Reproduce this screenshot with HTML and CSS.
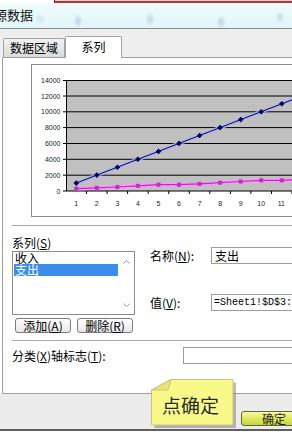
FILE: index.html
```html
<!DOCTYPE html>
<html>
<head>
<meta charset="utf-8">
<link rel="stylesheet" href="styles.css">
</head>
<body>
<div class="dlg">
  <div class="topstrip"><div class="ts-left"></div><div class="ts-red"></div></div>
  <div class="titlebar"><span class="title">源数据</span></div>
  <div class="tabstrip">
    <div class="tab">数据区域</div>
    <div class="tab active">系列</div>
  </div>
  <div class="panel">
    <div class="chartbox">
      <svg width="320" height="151" viewBox="0 0 320 151">
        <defs>
          <path id="dm" d="M0,-2.8 L2.8,0 L0,2.8 L-2.8,0Z" fill="#000060"/>
          <rect id="sq" x="-2" y="-2" width="4" height="4" fill="#c030c0"/>
        </defs>
        <rect x="34" y="15" width="290" height="111" fill="#c0c0c0"/>
        <g stroke="#000" stroke-width="1">
          <line x1="34" y1="15.5" x2="320" y2="15.5"/>
          <line x1="34" y1="31" x2="320" y2="31"/>
          <line x1="34" y1="46.8" x2="320" y2="46.8"/>
          <line x1="34" y1="62.6" x2="320" y2="62.6"/>
          <line x1="34" y1="78.5" x2="320" y2="78.5"/>
          <line x1="34" y1="94.3" x2="320" y2="94.3"/>
          <line x1="34" y1="110.2" x2="320" y2="110.2"/>
          <line x1="31" y1="126" x2="320" y2="126"/>
          <line x1="34.5" y1="15" x2="34.5" y2="126"/>
          <line x1="31" y1="15.5" x2="34" y2="15.5"/>
          <line x1="31" y1="31" x2="34" y2="31"/>
          <line x1="31" y1="46.8" x2="34" y2="46.8"/>
          <line x1="31" y1="62.6" x2="34" y2="62.6"/>
          <line x1="31" y1="78.5" x2="34" y2="78.5"/>
          <line x1="31" y1="94.3" x2="34" y2="94.3"/>
          <line x1="31" y1="110.2" x2="34" y2="110.2"/>
          <line x1="54.5" y1="126" x2="54.5" y2="129"/>
          <line x1="75.1" y1="126" x2="75.1" y2="129"/>
          <line x1="95.6" y1="126" x2="95.6" y2="129"/>
          <line x1="116.2" y1="126" x2="116.2" y2="129"/>
          <line x1="136.7" y1="126" x2="136.7" y2="129"/>
          <line x1="157.3" y1="126" x2="157.3" y2="129"/>
          <line x1="177.8" y1="126" x2="177.8" y2="129"/>
          <line x1="198.4" y1="126" x2="198.4" y2="129"/>
          <line x1="218.9" y1="126" x2="218.9" y2="129"/>
          <line x1="239.5" y1="126" x2="239.5" y2="129"/>
          <line x1="260" y1="126" x2="260" y2="129"/>
        </g>
        <g class="ylab" text-anchor="end">
          <text x="28.5" y="18">14000</text>
          <text x="28.5" y="33.5">12000</text>
          <text x="28.5" y="49.3">10000</text>
          <text x="28.5" y="65.1">8000</text>
          <text x="28.5" y="81">6000</text>
          <text x="28.5" y="96.8">4000</text>
          <text x="28.5" y="112.7">2000</text>
          <text x="28.5" y="128.5">0</text>
        </g>
        <g class="xlab" text-anchor="middle">
          <text x="44.3" y="140.5">1</text>
          <text x="64.8" y="140.5">2</text>
          <text x="85.4" y="140.5">3</text>
          <text x="105.9" y="140.5">4</text>
          <text x="126.5" y="140.5">5</text>
          <text x="147" y="140.5">6</text>
          <text x="167.6" y="140.5">7</text>
          <text x="188.1" y="140.5">8</text>
          <text x="208.7" y="140.5">9</text>
          <text x="229.2" y="140.5">10</text>
          <text x="249.3" y="140.5">11</text>
        </g>
        <polyline fill="none" stroke="#b4b4e6" stroke-width="4" opacity="0.8" points="44.3,118.1 64.8,110.1 85.4,102.2 105.9,94.3 126.5,86.4 147,78.4 167.6,70.5 188.1,62.6 208.7,54.6 229.2,46.7 249.8,38.8 270.3,30.9"/>
        <polyline fill="none" stroke="#000070" stroke-width="1" points="44.3,118.1 64.8,110.1 85.4,102.2 105.9,94.3 126.5,86.4 147,78.4 167.6,70.5 188.1,62.6 208.7,54.6 229.2,46.7 249.8,38.8 270.3,30.9"/>
        <polyline fill="none" stroke="#f0a0f0" stroke-width="4" points="44.3,123.6 64.8,122.8 85.4,122 105.9,120.8 126.5,119.7 147,119.7 167.6,118.9 188.1,117.7 208.7,116.5 229.2,115.3 249.8,115.3 270.3,114.5"/>
        <polyline fill="none" stroke="#d020d0" stroke-width="1.2" points="44.3,123.6 64.8,122.8 85.4,122 105.9,120.8 126.5,119.7 147,119.7 167.6,118.9 188.1,117.7 208.7,116.5 229.2,115.3 249.8,115.3 270.3,114.5"/>
        <use href="#dm" x="44.3" y="118.1"/><use href="#dm" x="64.8" y="110.1"/><use href="#dm" x="85.4" y="102.2"/>
        <use href="#dm" x="105.9" y="94.3"/><use href="#dm" x="126.5" y="86.4"/><use href="#dm" x="147" y="78.4"/>
        <use href="#dm" x="167.6" y="70.5"/><use href="#dm" x="188.1" y="62.6"/><use href="#dm" x="208.7" y="54.6"/>
        <use href="#dm" x="229.2" y="46.7"/><use href="#dm" x="249.8" y="38.8"/><use href="#dm" x="270.3" y="30.9"/>
        <use href="#sq" x="44.3" y="123.6"/><use href="#sq" x="64.8" y="122.8"/><use href="#sq" x="85.4" y="122"/>
        <use href="#sq" x="105.9" y="120.8"/><use href="#sq" x="126.5" y="119.7"/><use href="#sq" x="147" y="119.7"/>
        <use href="#sq" x="167.6" y="118.9"/><use href="#sq" x="188.1" y="117.7"/><use href="#sq" x="208.7" y="116.5"/>
        <use href="#sq" x="229.2" y="115.3"/><use href="#sq" x="249.8" y="115.3"/><use href="#sq" x="270.3" y="114.5"/>
      </svg>
    </div>
    <div class="series-sec">
      <div class="scol">
        <div class="lbl">系列(<u>S</u>)</div>
        <div class="list">
          <div class="items">
            <div class="item">收入</div>
            <div class="item sel">支出</div>
          </div>
          <div class="scroll">
            <svg width="7" height="4" viewBox="0 0 7 4"><path d="M0.5,3.5 L3.5,0.5 L6.5,3.5" fill="none" stroke="#9a9a9a" stroke-width="1"/></svg>
            <svg width="7" height="4" viewBox="0 0 7 4"><path d="M0.5,0.5 L3.5,3.5 L6.5,0.5" fill="none" stroke="#9a9a9a" stroke-width="1"/></svg>
          </div>
        </div>
        <div class="btns">
          <div class="btn">添加(<u>A</u>)</div>
          <div class="btn">删除(<u>R</u>)</div>
        </div>
      </div>
      <div class="fcol">
        <div class="frow">
          <span class="flbl">名称(<u>N</u>):</span>
          <div class="inp">支出</div>
        </div>
        <div class="frow second">
          <span class="flbl">值(<u>V</u>):</span>
          <div class="inp mono">=Sheet1!$D$3:$D$14</div>
        </div>
      </div>
    </div>
    <div class="cat-sec">
      <span class="clbl">分类(<u>X</u>)轴标志(<u>T</u>):</span>
      <div class="inp"></div>
    </div>
  </div>
  <div class="footer"><div class="okbtn">确定</div></div>
  <div class="callout">
    <svg class="callout-bg" width="88" height="52" viewBox="0 0 88 52">
      <polygon points="3.5,14 23,3.5 85,3.5 85,49 3.5,49" fill="#6a6a6a" opacity="0.45"/>
      <polygon points="0.5,11 20,0.5 82,0.5 82,46 0.5,46" fill="#f9f98a" stroke="#c9c47c" stroke-width="1"/>
      <polygon points="0.5,11 20,0.5 17,11" fill="#e9e47a" stroke="#c9c47c" stroke-width="1"/>
    </svg>
    <span class="callout-text">点确定</span>
  </div>
</div>
</body>
</html>
```
FILE: styles.css
```css
html, body {
  margin: 0;
  padding: 0;
  width: 292px;
  height: 435px;
  overflow: hidden;
  background: #ffffff;
}
body {
  font-family: "Noto Sans CJK SC", "Liberation Sans", sans-serif;
  font-size: 12px;
  color: #000;
}
u { text-decoration: underline; text-underline-offset: 1px; }
.dlg {
  width: 340px;
  position: relative;
}
.topstrip {
  height: 3px;
  display: flex;
}
.ts-left { width: 54px; background: #fff; }
.ts-red {
  flex: 1;
  box-sizing: border-box;
  background: #e6d2d2;
  border-left: 1px solid #4a2020;
  border-bottom: 2px solid #b03838;
}
.titlebar {
  height: 25px;
  border-bottom: 1px solid #8a8a8a;
  display: flex;
  align-items: center;
  background:
    radial-gradient(ellipse 5px 7px at 78px 18px, rgba(110,140,175,0.35), transparent),
    radial-gradient(ellipse 5px 7px at 150px 16px, rgba(110,140,175,0.3), transparent),
    radial-gradient(ellipse 5px 7px at 221px 19px, rgba(110,140,175,0.35), transparent),
    radial-gradient(ellipse 5px 7px at 280px 14px, rgba(110,140,175,0.25), transparent),
    radial-gradient(ellipse 6px 6px at 40px 16px, rgba(140,200,220,0.3), transparent),
    linear-gradient(#f0fbfd, #e2f5f9);
}
.title {
  margin-left: -6px;
  margin-top: -2px;
  font-size: 13px;
  line-height: 16px;
  color: #111;
}
.tabstrip {
  height: 28px;
  box-sizing: border-box;
  background: #eeeeee;
  display: flex;
  align-items: flex-end;
  padding-left: 3px;
}
.tab {
  box-sizing: border-box;
  height: 19px;
  width: 62px;
  background: linear-gradient(#f2f2f2, #dadada);
  border: 1px solid #a4a4a4;
  border-bottom: none;
  border-radius: 2px 2px 0 0;
  text-align: center;
  line-height: 17px;
  font-size: 12px;
}
.tab.active {
  height: 22px;
  width: 57px;
  background: #fff;
  margin-bottom: -1px;
  position: relative;
  z-index: 1;
  line-height: 20px;
}
.panel {
  margin-left: 2px;
  height: 335px;
  border: 1px solid #a0a0a0;
  border-right: none;
  background: #fff;
}
.chartbox {
  margin: 6px 0 0 28px;
  width: 320px;
  height: 151px;
  border: 1px solid #8a8a8a;
  background: #fff;
}
.chartbox svg { display: block; }
.ylab text, .xlab text {
  font-family: "Liberation Sans", sans-serif;
  font-size: 7px;
  fill: #222;
}
.series-sec {
  margin: 8px 0 0 9px;
  border-top: 1px solid #a8a8a8;
  display: flex;
}
.scol {
  width: 123px;
  padding-top: 10px;
}
.lbl {
  height: 14px;
  line-height: 14px;
}
.list {
  margin-top: 1px;
  height: 62px;
  border: 1px solid #8c8c8c;
  display: flex;
}
.items {
  width: 104px;
  padding-left: 1px;
}
.item {
  height: 12px;
  line-height: 12px;
  padding-left: 1px;
}
.item.sel {
  background: #3a8ee8;
  color: #fff;
}
.scroll {
  flex: 1;
  display: flex;
  flex-direction: column;
  justify-content: space-between;
  align-items: center;
  padding: 8px 0 7px;
}
.scroll svg { display: block; }
.btns {
  margin-top: 3px;
  padding-left: 3px;
  display: flex;
  gap: 6px;
}
.btn {
  box-sizing: border-box;
  width: 56px;
  height: 15px;
  border: 1px solid #7c7c7c;
  border-radius: 3px;
  background: linear-gradient(#ffffff, #e6e6e6);
  text-align: center;
  line-height: 13px;
  font-size: 12px;
}
.fcol {
  margin-left: 15px;
  padding-top: 21px;
  flex: 1;
}
.frow {
  display: flex;
  align-items: center;
  height: 17px;
}
.frow.second { margin-top: 30px; }
.flbl {
  width: 61px;
  white-space: nowrap;
}
.inp {
  flex: 1;
  box-sizing: border-box;
  height: 17px;
  border: 1px solid #9c9c9c;
  background: #fff;
  padding-left: 3px;
  line-height: 15px;
  white-space: nowrap;
  overflow: hidden;
}
.inp.mono {
  font-family: "Liberation Mono", monospace;
  font-size: 10px;
  padding-left: 2px;
}
.cat-sec {
  margin: 7px 0 0 9px;
  border-top: 1px solid #a8a8a8;
  padding-top: 6px;
  display: flex;
  align-items: center;
}
.clbl {
  width: 171px;
  white-space: nowrap;
}
.footer {
  height: 18px;
  padding: 17px 0 0 241px;
  background: #ececec;
  border-bottom: 2px solid #5e5e5e;
}
.okbtn {
  box-sizing: border-box;
  width: 62px;
  height: 15px;
  border: 1px solid #5a6c2c;
  border-radius: 3px;
  background: linear-gradient(#f6f8a8, #dfe860 50%, #c9d440);
  text-align: left;
  padding-left: 20px;
  line-height: 13px;
  font-size: 12px;
  color: #222;
}
.callout {
  position: absolute;
  left: 151px;
  top: 379px;
  width: 88px;
  height: 52px;
  z-index: 5;
}
.callout-bg {
  position: absolute;
  left: 0;
  top: 0;
}
.callout-text {
  position: relative;
  display: block;
  padding: 16px 0 0 11px;
  font-size: 19px;
  line-height: 20px;
  color: #2a2a2a;
  letter-spacing: 0;
}
```
